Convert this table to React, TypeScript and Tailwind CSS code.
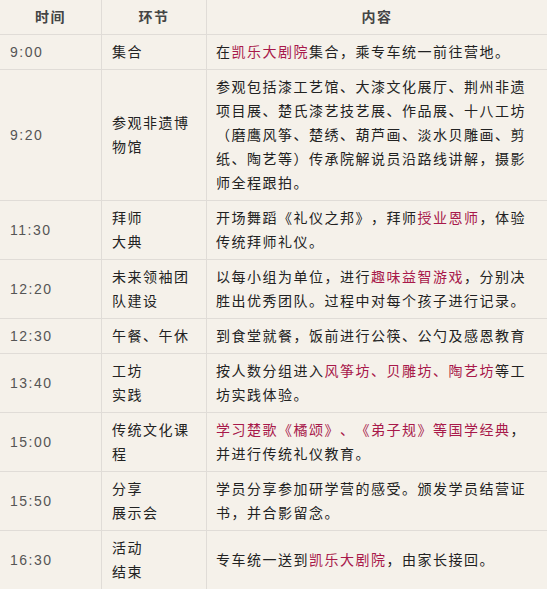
import React from "react";

type Seg = string | { r: string };
type Row = { time: string; step: string[]; content: Seg[] };

const rows: Row[] = [
  { time: "9:00", step: ["集合"], content: ["在", { r: "凯乐大剧院" }, "集合，乘专车统一前往营地。"] },
  {
    time: "9:20",
    step: ["参观非遗博物馆"],
    content: [
      "参观包括漆工艺馆、大漆文化展厅、荆州非遗项目展、楚氏漆艺技艺展、作品展、十八工坊（磨鹰风筝、楚绣、葫芦画、淡水贝雕画、剪纸、陶艺等）传承院解说员沿路线讲解，摄影师全程跟拍。",
    ],
  },
  { time: "11:30", step: ["拜师", "大典"], content: ["开场舞蹈《礼仪之邦》，拜师", { r: "授业恩师" }, "，体验传统拜师礼仪。"] },
  {
    time: "12:20",
    step: ["未来领袖团队建设"],
    content: ["以每小组为单位，进行", { r: "趣味益智游戏" }, "，分别决胜出优秀团队。过程中对每个孩子进行记录。"],
  },
  { time: "12:30", step: ["午餐、午休"], content: ["到食堂就餐，饭前进行公筷、公勺及感恩教育"] },
  {
    time: "13:40",
    step: ["工坊", "实践"],
    content: ["按人数分组进入", { r: "风筝坊、贝雕坊、陶艺坊" }, "等工坊实践体验。"],
  },
  {
    time: "15:00",
    step: ["传统文化课程"],
    content: [{ r: "学习楚歌《橘颂》、《弟子规》等国学经典" }, "，并进行传统礼仪教育。"],
  },
  { time: "15:50", step: ["分享", "展示会"], content: ["学员分享参加研学营的感受。颁发学员结营证书，并合影留念。"] },
  { time: "16:30", step: ["活动", "结束"], content: ["专车统一送到", { r: "凯乐大剧院" }, "，由家长接回。"] },
];

const font = { fontFamily: '"Liberation Sans", "Noto Sans CJK SC", sans-serif' };

export default function App() {
  return (
    <div
      className="w-[547px] h-[589px] overflow-hidden bg-[#f5f1ea] text-[14px] leading-[24px] tracking-[1.5px] text-[#222] [text-spacing-trim:space-all] [font-feature-settings:'fwid']"
      style={font}
    >
      <div className="grid grid-cols-[102px_105px_1fr] border-b border-[#e0dcd7]">
        <div className="border-r border-[#e0dcd7] py-[5px] text-center font-bold text-[#444]">时间</div>
        <div className="border-r border-[#e0dcd7] py-[5px] text-center font-bold text-[#444]">环节</div>
        <div className="py-[5px] text-center font-bold text-[#444]">内容</div>
      </div>
      {rows.map((row) => (
        <div key={row.time} className="grid grid-cols-[102px_105px_1fr] border-b border-[#e0dcd7]">
          <div className="flex items-center border-r border-[#e0dcd7] py-[5px] pl-[10px] text-[#555] [font-feature-settings:normal]">
            {row.time}
          </div>
          <div className="flex flex-col justify-center border-r border-[#e0dcd7] py-[5px] pl-[10px] pr-[10px]">
            {row.step.map((s) => (
              <div key={s}>{s}</div>
            ))}
          </div>
          <div className="flex items-center py-[5px] pl-[9px] pr-[8px]">
            <div>
              {row.content.map((seg, i) =>
                typeof seg === "string" ? (
                  <span key={i}>{seg}</span>
                ) : (
                  <span key={i} className="text-[#a8194a]">
                    {seg.r}
                  </span>
                )
              )}
            </div>
          </div>
        </div>
      ))}
    </div>
  );
}
